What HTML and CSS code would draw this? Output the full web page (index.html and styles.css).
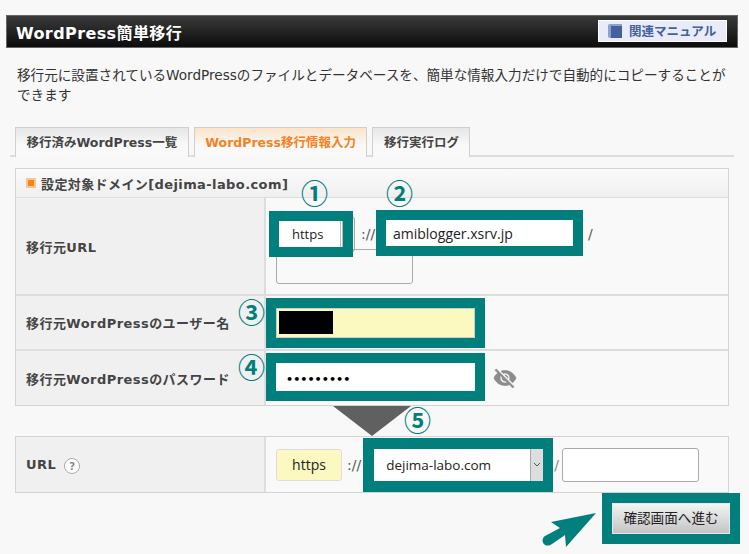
FILE: index.html
```html
<!DOCTYPE html>
<html lang="ja">
<head>
  <meta charset="UTF-8" />
  <title>WordPress簡単移行</title>
  <link rel="stylesheet" href="styles.css">
</head>
<body>
  <div class="page">
    <header class="title-bar">
      <h1>WordPress簡単移行</h1>
      <a class="manual-btn" href="#">
        <svg class="book" viewBox="0 0 14 14"><path d="M2 0h12v14H2a2 2 0 0 1-2-2V2a2 2 0 0 1 2-2z" fill="#8fa0cc"/><path d="M3 2h11v12H3z" fill="#44609f"/></svg>
        関連マニュアル
      </a>
    </header>

    <p class="intro">移行元に設置されているWordPressのファイルとデータベースを、簡単な情報入力だけで自動的にコピーすることができます</p>

    <nav class="tabs">
      <a class="tab" href="#">移行済みWordPress一覧</a>
      <a class="tab active" href="#">WordPress移行情報入力</a>
      <a class="tab" href="#">移行実行ログ</a>
    </nav>

    <section class="panel">
      <h2 class="panel-head"><span class="bullet"></span>設定対象ドメイン[dejima-labo.com]</h2>

      <div class="row row-url">
        <div class="label">移行元URL</div>
        <div class="cell cell-url">
          <div class="url-line">
            <div class="mark mark-https"><span class="field field-https">https</span></div>
            <span class="select-edge"></span>
            <span class="sep sep-top">://</span>
            <div class="mark mark-host"><span class="field field-host">amiblogger.xsrv.jp</span></div>
            <span class="sep sep-slash">/</span>
          </div>
          <div class="extra-box"></div>
        </div>
      </div>

      <div class="row row-user">
        <div class="label">移行元WordPressのユーザー名</div>
        <div class="cell">
          <div class="mark mark-wide"><span class="field field-user"><span class="redact"></span></span></div>
        </div>
      </div>

      <div class="row row-pass">
        <div class="label">移行元WordPressのパスワード</div>
        <div class="cell">
          <div class="mark mark-wide mark-pass"><span class="field field-pass">•••••••••</span></div>
          <svg class="eye" viewBox="0 0 24 24"><path fill="#8c8c8c" stroke="#8c8c8c" stroke-width=".7" d="M12 7c2.76 0 5 2.24 5 5 0 .65-.13 1.26-.36 1.83l2.92 2.92c1.51-1.26 2.7-2.89 3.43-4.75-1.73-4.39-6-7.5-11-7.5-1.4 0-2.74.25-3.98.7l2.16 2.16C10.74 7.13 11.35 7 12 7zM2 4.27l2.28 2.28.46.46C3.08 8.3 1.78 10.02 1 12c1.73 4.39 6 7.5 11 7.5 1.55 0 3.03-.3 4.38-.84l.42.42L19.73 22 21 20.73 3.27 3 2 4.27zM7.53 9.8l1.55 1.55c-.05.21-.08.43-.08.65 0 1.66 1.34 3 3 3 .22 0 .44-.03.65-.08l1.55 1.55c-.67.33-1.41.53-2.2.53-2.76 0-5-2.24-5-5 0-.79.2-1.53.53-2.2zm4.31-.78l3.15 3.15.02-.16c0-1.66-1.34-3-3-3l-.17.01z"/></svg>
        </div>
      </div>
    </section>

    <div class="flow-arrow"></div>

    <section class="panel">
      <div class="row row-dest">
        <div class="label">URL <span class="help">?</span></div>
        <div class="cell cell-dest">
          <span class="field-fixed">https</span>
          <span class="sep">://</span>
          <div class="mark mark-domain">
            <span class="field field-domain">dejima-labo.com<span class="select-btn"><svg viewBox="0 0 8 5"><path d="M1 1l3 3 3-3" fill="none" stroke="#555" stroke-width="1"/></svg></span></span>
          </div>
          <span class="sep sep-dest">/</span>
          <span class="field-dir"></span>
        </div>
      </div>
    </section>

    <div class="actions">
      <svg class="pointer" viewBox="0 0 56 35"><path d="M55 0L10 9l9 6L4 23c-3 2-3 6-1 8s5 2 8 0l13-9 1 12z" fill="#007f7c"/></svg>
      <div class="mark mark-submit"><a class="submit" href="#">確認画面へ進む</a></div>
    </div>

    <span class="num num-1">①</span>
    <span class="num num-2">②</span>
    <span class="num num-3">③</span>
    <span class="num num-4">④</span>
    <span class="num num-5">⑤</span>
  </div>
</body>
</html>
```

FILE: styles.css
```css
body {
  margin: 0;
  background-color: #f8f8f8;
  color: #333;
  font-family: "DejaVu Sans", "Noto Sans CJK JP", sans-serif;
  font-size: 14px;
}

.page {
  position: relative;
  width: 749px;
  height: 554px;
  padding-top: 15px;
  box-sizing: border-box;
  overflow: hidden;
}

.title-bar {
  display: flex;
  justify-content: space-between;
  align-items: center;
  box-sizing: border-box;
  width: 732px;
  height: 33px;
  margin-left: 6px;
  padding: 0 10px 0 9px;
  background: linear-gradient(#3a3a3a, #0c0c0c);
  border: 1px solid #666;
}

.title-bar h1 {
  margin: 0;
  color: #fff;
  font-size: 16px;
  font-weight: bold;
  letter-spacing: .4px;
}

.manual-btn {
  display: flex;
  align-items: center;
  gap: 7px;
  box-sizing: border-box;
  width: 129px;
  height: 22px;
  padding-left: 9px;
  margin-top: -2px;
  background-color: #e9ecf8;
  border: 1px solid #fff;
  color: #44609f;
  font-size: 12.5px;
  font-weight: bold;
  text-decoration: none;
}

.book {
  width: 14px;
  height: 14px;
}

.intro {
  width: 720px;
  margin: 17px 0 22px 17px;
  color: #333;
  font-size: 13.6px;
  line-height: 20px;
}

.tabs {
  display: flex;
  gap: 5px;
  box-sizing: border-box;
  width: 724px;
  height: 30px;
  margin-left: 10px;
  padding-left: 5px;
  border-bottom: 2px solid #ddd;
}

.tab {
  box-sizing: border-box;
  height: 30px;
  padding: 0 10.5px;
  background: linear-gradient(#e6e6e6, #f9f9f9 60%);
  border: 1px solid #d0d0d0;
  border-bottom: none;
  color: #444;
  font-size: 12.5px;
  font-weight: bold;
  line-height: 30px;
  text-decoration: none;
}

.tab.active {
  background: linear-gradient(#fbe3c8, #f9f9f9 60%);
  color: #f58220;
}

.panel {
  box-sizing: border-box;
  width: 714px;
  margin: 11px 0 0 15px;
  background-color: #f9f9f9;
  border: 1px solid #d4d4d4;
}

.panel + .flow-arrow + .panel {
  margin-top: 0;
}

.panel-head {
  display: flex;
  align-items: center;
  gap: 5px;
  box-sizing: border-box;
  height: 29px;
  margin: 0;
  padding-left: 10px;
  background: linear-gradient(#fafafa, #f0f0f0);
  border-bottom: 1px solid #ddd;
  color: #444;
  font-size: 13px;
  font-weight: bold;
  letter-spacing: .4px;
}

.bullet {
  width: 10px;
  height: 10px;
  background-color: #f58220;
  border: 2px solid #fbc58f;
  box-sizing: border-box;
}

.row {
  display: grid;
  grid-template-columns: 250px 1fr;
  box-sizing: border-box;
  border-bottom: 2px solid #ddd;
}

.row:last-child {
  border-bottom: none;
}

.row-url { height: 98px; }
.row-user { height: 55px; }
.row-pass { height: 54px; }
.row-dest { height: 55px; }

.label {
  display: flex;
  align-items: center;
  gap: 8px;
  padding-left: 10px;
  background-color: #f0f0f0;
  border-right: 2px solid #ddd;
  color: #444;
  font-size: 13px;
  font-weight: bold;
  letter-spacing: .45px;
}

.cell {
  display: flex;
  align-items: center;
  min-width: 0;
}

.mark {
  position: relative;
  z-index: 1;
  display: flex;
  box-sizing: border-box;
  border: 10px solid #007f7c;
}

.field {
  display: flex;
  align-items: center;
  box-sizing: border-box;
  width: 100%;
  background-color: #fff;
  color: #222;
  font-family: "Open Sans", "Noto Sans", sans-serif;
  font-size: 14px;
}

.cell-url {
  display: block;
  padding: 13px 0 0 3px;
}

.url-line {
  display: flex;
  align-items: center;
}

.mark-https {
  width: 84px;
  height: 46px;
}

.field-https {
  padding-left: 13px;
  border-right: 3px double #bbb;
  font-size: 13px;
}

.select-edge {
  width: 12px;
  height: 35px;
  margin-left: -10px;
  border: 1px solid #aaa;
  border-left: none;
  border-radius: 0 3px 3px 0;
  box-sizing: border-box;
}

.sep {
  color: #555;
  font-size: 14px;
}

.sep-top {
  width: 15px;
  margin-left: 6px;
}

.mark-host {
  width: 207px;
  height: 46px;
  margin-top: -2px;
}

.field-host {
  padding-left: 7px;
}

.sep-slash {
  margin-left: 5px;
}

.extra-box {
  box-sizing: border-box;
  width: 137px;
  height: 35px;
  margin: -8px 0 0 7px;
  border: 1px solid #aaa;
  border-radius: 3px;
}

.mark-wide {
  width: 219px;
  height: 50px;
}

.mark-pass {
  height: 48px;
  margin-top: -2px;
}

.field-user {
  padding-left: 2px;
  background-color: #fbf8c0;
  border: 1px solid #ccc;
}

.redact {
  width: 54px;
  height: 23px;
  background-color: #000;
}

.field-pass {
  padding: 4px 0 0 10px;
  color: #000;
  font-family: "DejaVu Sans", sans-serif;
  font-size: 11.2px;
  font-weight: bold;
}

.eye {
  width: 24px;
  height: 24px;
  margin-left: 8px;
}

.flow-arrow {
  width: 0;
  height: 0;
  margin-left: 333px;
  border-top: 30px solid #606060;
  border-left: 39.5px solid transparent;
  border-right: 39.5px solid transparent;
}

.help {
  display: inline-flex;
  align-items: center;
  justify-content: center;
  box-sizing: border-box;
  width: 16px;
  height: 16px;
  margin-top: 3px;
  background-color: #fff;
  border: 1px solid #aaa;
  border-radius: 50%;
  color: #888;
  font-size: 10px;
  letter-spacing: 0;
}

.cell-dest {
  padding-left: 10px;
}

.field-fixed {
  display: flex;
  align-items: center;
  justify-content: center;
  box-sizing: border-box;
  width: 66px;
  height: 32px;
  background-color: #fbf8c0;
  border: 1px solid #ddd;
  border-radius: 3px;
  color: #222;
  font-family: "Open Sans", "Noto Sans", sans-serif;
  font-size: 14px;
}

.cell-dest .sep {
  margin-left: 5px;
}

.mark-domain {
  width: 190px;
  height: 54px;
  margin-left: 2px;
  border-width: 11px;
  border-right-width: 10px;
}

.field-domain {
  position: relative;
  padding-left: 12px;
  font-size: 13.5px;
}

.select-btn {
  display: flex;
  align-items: center;
  justify-content: center;
  position: absolute;
  top: 0;
  right: 0;
  width: 12px;
  height: 100%;
  background-color: #ddd;
  border-left: 1px solid #aaa;
}

.select-btn svg {
  width: 8px;
  height: 5px;
}

.cell-dest .sep-dest {
  width: 4px;
  margin-left: 1px;
  color: #888;
}

.field-dir {
  box-sizing: border-box;
  width: 137px;
  height: 34px;
  margin-left: 4px;
  background-color: #fff;
  border: 1px solid #aaa;
  border-radius: 3px;
}

.actions {
  display: flex;
  justify-content: flex-end;
  align-items: flex-start;
  gap: 5px;
  width: 740px;
}

.pointer {
  width: 56px;
  height: 35px;
  margin-top: 20px;
}

.mark-submit {
  width: 138px;
  height: 51px;
}

.submit {
  width: 100%;
  background: linear-gradient(#f4f4f4, #c4c4c4);
  border: 1px solid #e8e8e8;
  color: #222;
  font-size: 13.6px;
  line-height: 28px;
  text-align: center;
  text-decoration: none;
}

.num {
  position: absolute;
  z-index: 2;
  width: 26px;
  color: #007f7c;
  font-family: "Noto Sans CJK JP", sans-serif;
  font-size: 27px;
  font-weight: bold;
  line-height: 26px;
  text-align: center;
}

.num-1 { left: 301px; top: 180px; }
.num-2 { left: 386px; top: 180px; }
.num-3 { left: 238px; top: 299px; }
.num-4 { left: 238px; top: 354px; }
.num-5 { left: 404px; top: 407px; }
```
